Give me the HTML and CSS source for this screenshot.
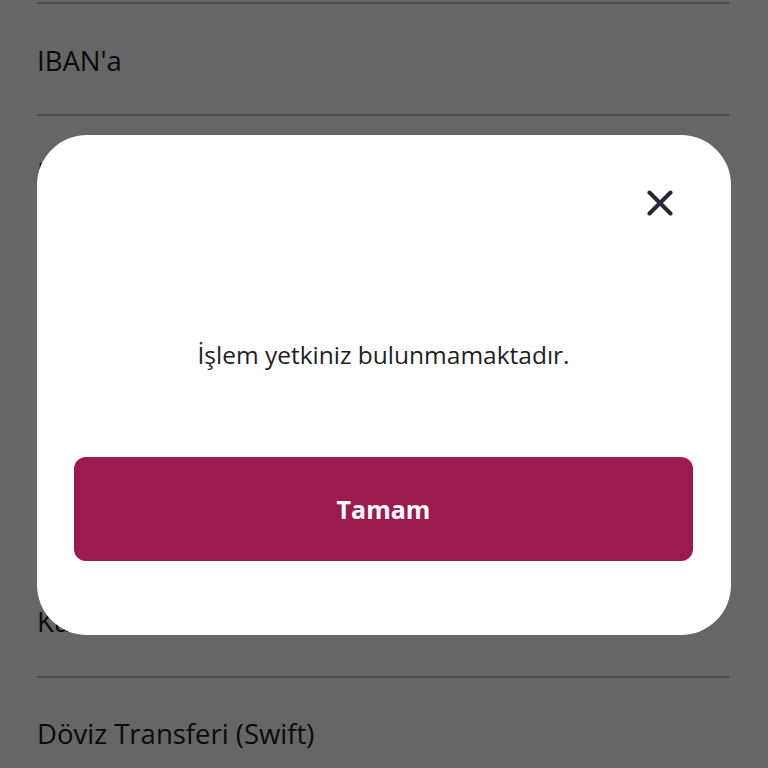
FILE: index.html
```html
<!DOCTYPE html>
<html lang="tr">
<head>
<meta charset="utf-8">
<title>İşlem</title>
<link rel="stylesheet" href="styles.css">
</head>
<body>
<ul class="list">
  <li class="row">IBAN'a</li>
  <li class="row">Hesap Numarasına</li>
  <li class="row">Kredi Kartına</li>
  <li class="row">Kendi Hesaplarım Arasında</li>
  <li class="row">Başka Bankaya</li>
  <li class="row">Kurum Ödemeleri</li>
  <li class="row">Döviz Transferi (Swift)</li>
</ul>
<div class="overlay"></div>
<div class="modal">
  <div class="modal-head">
    <button class="close" aria-label="Kapat">
      <svg width="26" height="26" viewBox="0 0 26 26"><path d="M2.5 2.5L23.5 23.5M23.5 2.5L2.5 23.5" stroke="#262838" stroke-width="4" stroke-linecap="round" fill="none"/></svg>
    </button>
  </div>
  <p class="message">İşlem yetkiniz bulunmamaktadır.</p>
  <button class="ok">Tamam</button>
</div>
</body>
</html>
```
FILE: styles.css
```css
html, body {
  margin: 0;
  padding: 0;
}
body {
  width: 768px;
  height: 768px;
  overflow: hidden;
  background: #ffffff;
  font-family: "Open Sans", "Lato", sans-serif;
  position: relative;
}
.list {
  list-style: none;
  margin: 0;
  padding: 2px 38px 0 37px;
}
.row {
  box-sizing: border-box;
  height: 112.3px;
  border-top: 2px solid #c7c7c7;
  display: flex;
  align-items: center;
  font-size: 27.5px;
  color: #1a1a1a;
  padding-top: 2px;
}
.overlay {
  position: absolute;
  inset: 0;
  background: rgba(0, 0, 0, 0.6);
}
.modal {
  position: absolute;
  left: 37px;
  top: 135px;
  width: 694px;
  height: 500px;
  box-sizing: border-box;
  background: #ffffff;
  border-radius: 50px;
  padding: 0 38px 0 37px;
  display: flex;
  flex-direction: column;
}
.modal-head {
  display: flex;
  justify-content: flex-end;
  padding-top: 55px;
  padding-right: 20px;
}
.close {
  width: 26px;
  height: 26px;
  padding: 0;
  border: 0;
  background: none;
  display: block;
}
.close svg {
  display: block;
}
.message {
  margin: 124px 0 0;
  text-align: center;
  font-size: 24.5px;
  line-height: 30px;
  color: #1e1e24;
}
.ok {
  margin-top: 87px;
  height: 104px;
  border: 0;
  border-radius: 12px;
  background: #9c1b4f;
  color: #ffffff;
  font-family: "Open Sans", "Lato", sans-serif;
  font-weight: 700;
  font-size: 25px;
}
```
